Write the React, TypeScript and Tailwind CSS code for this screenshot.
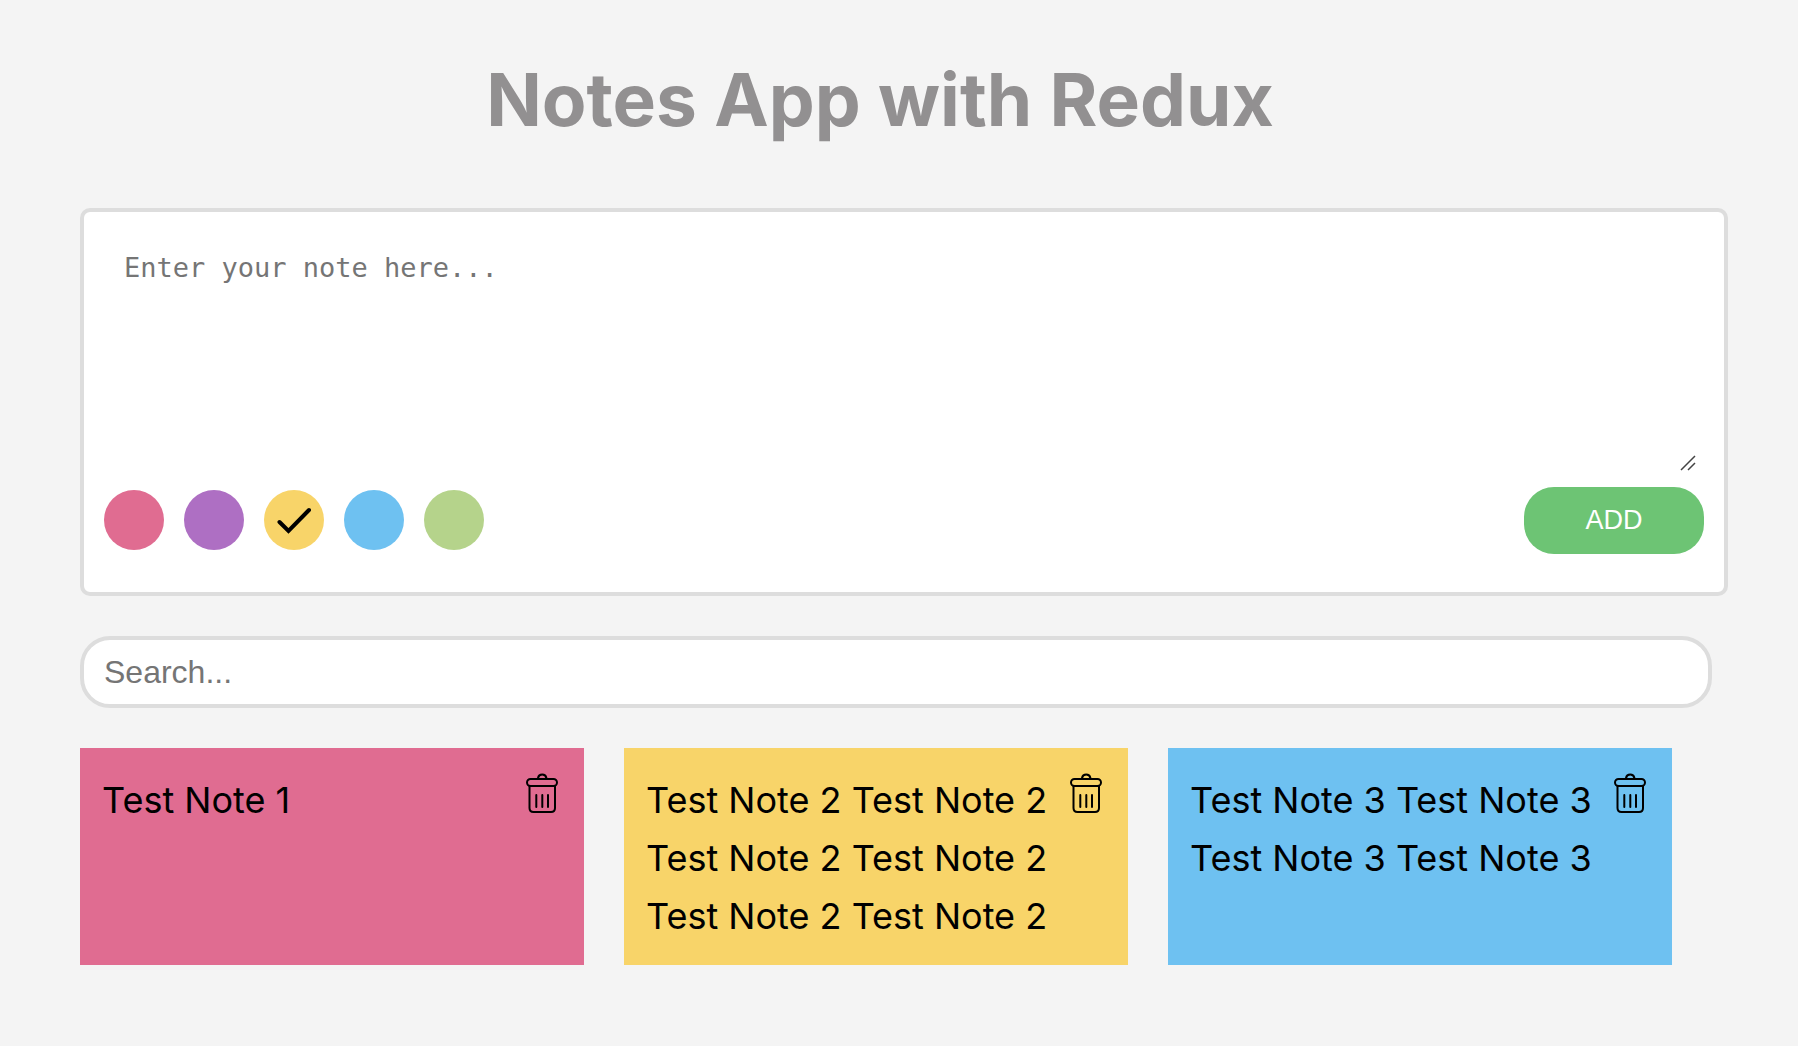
import { useState } from "react";

const COLORS = [
  { name: "Pink", bg: "bg-[#e06c91]" },
  { name: "Purple", bg: "bg-[#ae6fc3]" },
  { name: "Yellow", bg: "bg-[#f8d469]" },
  { name: "Blue", bg: "bg-[#6ec1f1]" },
  { name: "Green", bg: "bg-[#b5d38b]" },
];

const INITIAL = [
  { text: "Test Note 1", bg: "bg-[#e06c91]" },
  { text: "Test Note 2 Test Note 2 Test Note 2 Test Note 2 Test Note 2 Test Note 2", bg: "bg-[#f8d469]" },
  { text: "Test Note 3 Test Note 3 Test Note 3 Test Note 3", bg: "bg-[#6ec1f1]" },
];

function CheckIcon() {
  return (
    <svg viewBox="0 0 36 28" className="h-7 w-9" fill="none" stroke="currentColor" strokeWidth="4" strokeLinecap="round" aria-hidden="true">
      <path d="M3.5 16 L12.5 25 L33 4" />
    </svg>
  );
}

function TrashIcon() {
  return (
    <svg viewBox="0 0 32 40" className="h-10 w-8" fill="none" stroke="currentColor" strokeWidth="2" strokeLinecap="round" aria-hidden="true">
      <path d="M12 5 A4.3 4.3 0 0 1 20.4 5" />
      <rect x="1" y="6" width="30" height="7" rx="3.5" />
      <path d="M3.5 13 V35 Q3.5 39 7.5 39 H25 Q29 39 29 35 V13" />
      <path d="M10.3 22 V34 M16.3 22 V34 M22 22 V34" />
    </svg>
  );
}

export default function App() {
  const [color, setColor] = useState("Yellow");
  const [text, setText] = useState("");
  const [query, setQuery] = useState("");
  const [notes, setNotes] = useState(INITIAL);

  const add = () => {
    const picked = COLORS.find((c) => c.name === color);
    if (text.trim() && picked) {
      setNotes([...notes, { text, bg: picked.bg }]);
      setText("");
    }
  };

  return (
    <main className="min-h-screen bg-[#f4f4f4] pt-[55px] pr-[70px] pb-10 pl-20 font-['Inter',sans-serif] text-black">
      <h1 className="pr-12 text-center text-[73px] leading-[90px] font-bold text-[#929091]">Notes App with Redux</h1>

      <form
        className="mt-[63px] rounded-[10px] border-4 border-[#ddd] bg-white px-5 pt-5 pb-[38px]"
        onSubmit={(e) => {
          e.preventDefault();
          add();
        }}
      >
        <div className="relative mr-1.5">
          <textarea
            aria-label="Note"
            value={text}
            onChange={(e) => setText(e.target.value)}
            placeholder="Enter your note here..."
            className="block h-[241px] w-full resize-none px-5 py-5 font-['DejaVu_Sans_Mono',monospace] text-[27px] leading-8 outline-none placeholder:text-[#757575]"
          />
          <svg viewBox="0 0 16 16" className="pointer-events-none absolute right-0.5 bottom-0.5 size-4" fill="none" stroke="#444" strokeWidth="1.5" aria-hidden="true">
            <path d="M1 15 L15 1 M8 15 L15 8" />
          </svg>
        </div>
        <div className="mt-[14px] flex items-start justify-between">
          <div className="flex gap-5 pt-[3px]">
            {COLORS.map((c) => (
              <button
                key={c.name}
                type="button"
                aria-label={c.name}
                aria-pressed={c.name === color}
                onClick={() => setColor(c.name)}
                className={`flex size-15 items-center justify-center rounded-full ${c.bg}`}
              >
                {c.name === color && <CheckIcon />}
              </button>
            ))}
          </div>
          <button type="submit" className="h-[67px] w-[180px] rounded-[30px] bg-[#6dc474] font-['Liberation_Sans',sans-serif] text-[27px] text-white">
            ADD
          </button>
        </div>
      </form>

      <div className="mt-10 mr-4">
        <input
          type="search"
          aria-label="Search notes"
          value={query}
          onChange={(e) => setQuery(e.target.value)}
          placeholder="Search..."
          className="block h-[72px] w-full rounded-[30px] border-4 border-[#ddd] bg-white px-5 font-['Liberation_Sans',sans-serif] text-[32px] outline-none placeholder:text-[#757575]"
        />
      </div>

      <section className="mt-10 mr-14 grid grid-cols-3 gap-10">
        {notes
          .filter((n) => n.text.toLowerCase().includes(query.toLowerCase()))
          .map((n) => (
            <article key={n.text} className={`flex items-start justify-between pt-[23px] pr-[26px] pb-5 pl-[22px] ${n.bg}`}>
              <p className="min-w-0 flex-1 text-[36px] leading-[58px]">{n.text}</p>
              <button type="button" aria-label={`Delete ${n.text}`} className="mt-0.5 ml-4 shrink-0" onClick={() => setNotes(notes.filter((m) => m !== n))}>
                <TrashIcon />
              </button>
            </article>
          ))}
      </section>
    </main>
  );
}
